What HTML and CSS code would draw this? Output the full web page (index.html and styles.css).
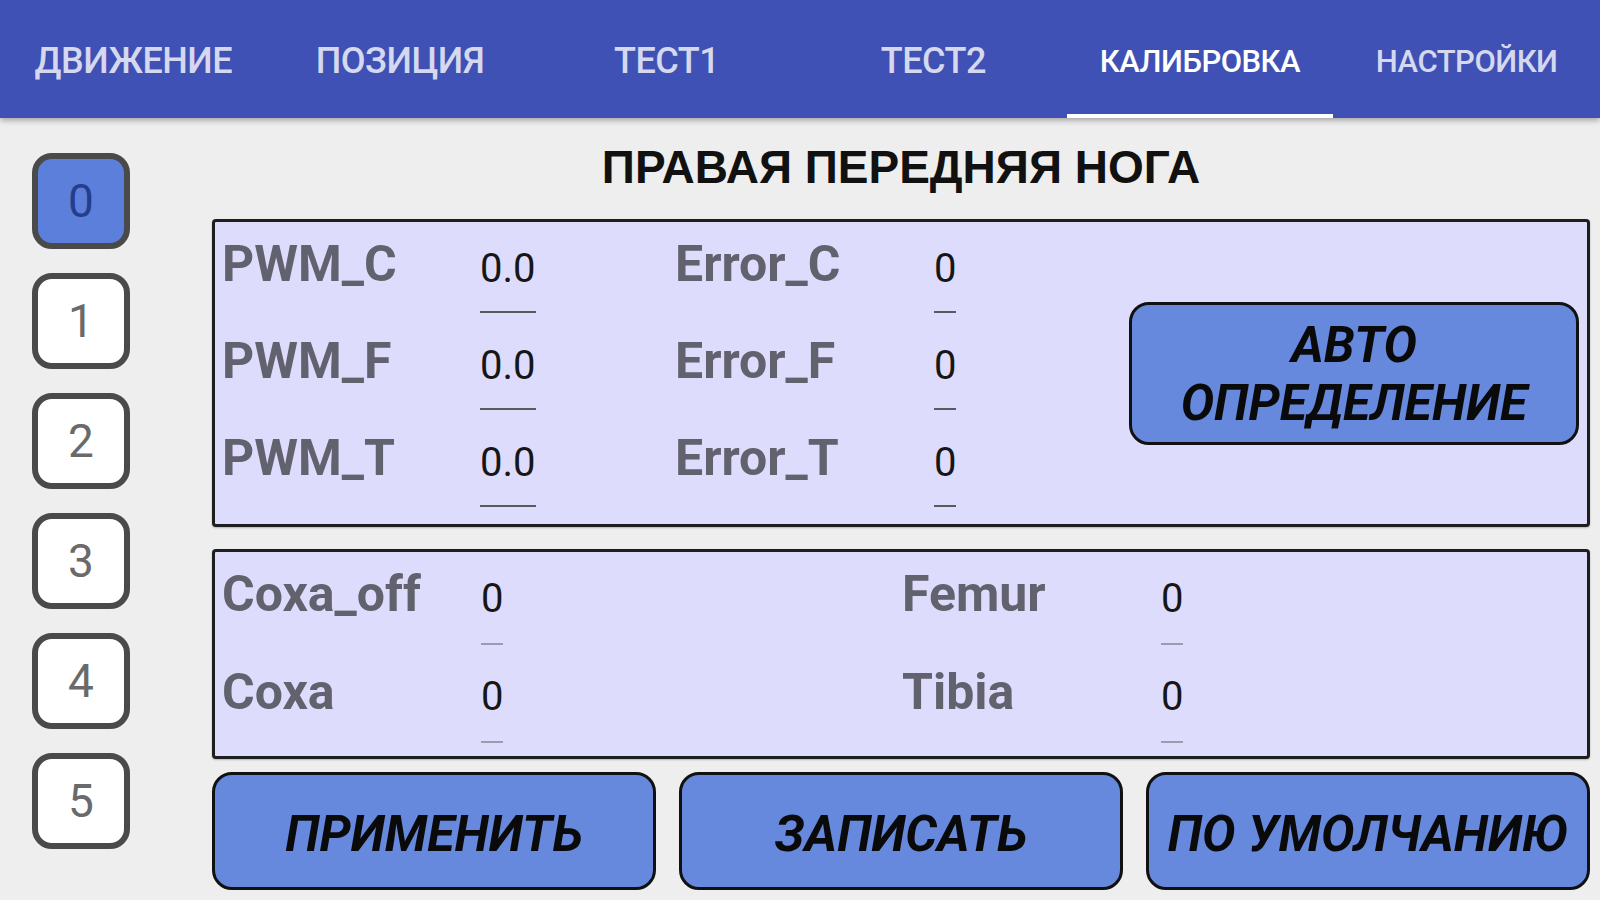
FILE: index.html
```html
<!DOCTYPE html>
<html lang="ru">
<head>
<meta charset="utf-8">
<title>Калибровка</title>
<link rel="stylesheet" href="styles.css">
</head>
<body>
<header class="tabs">
  <div class="tab">ДВИЖЕНИЕ</div>
  <div class="tab">ПОЗИЦИЯ</div>
  <div class="tab">ТЕСТ1</div>
  <div class="tab">ТЕСТ2</div>
  <div class="tab small active">КАЛИБРОВКА</div>
  <div class="tab small">НАСТРОЙКИ</div>
</header>
<main class="main">
  <nav class="legs">
    <div class="leg selected">0</div>
    <div class="leg">1</div>
    <div class="leg">2</div>
    <div class="leg">3</div>
    <div class="leg">4</div>
    <div class="leg">5</div>
  </nav>
  <section class="content">
    <h1 class="title">ПРАВАЯ ПЕРЕДНЯЯ НОГА</h1>
    <div class="panel panel-pwm">
      <div class="grid grid-pwm">
        <div class="label">PWM_C</div><div class="cell"><span class="val">0.0</span></div>
        <div class="label">Error_C</div><div class="cell"><span class="val">0</span></div>
        <div class="label">PWM_F</div><div class="cell"><span class="val">0.0</span></div>
        <div class="label">Error_F</div><div class="cell"><span class="val">0</span></div>
        <div class="label">PWM_T</div><div class="cell"><span class="val">0.0</span></div>
        <div class="label">Error_T</div><div class="cell"><span class="val">0</span></div>
      </div>
      <button class="btn btn-auto">АВТО<br>ОПРЕДЕЛЕНИЕ</button>
    </div>
    <div class="panel panel-off">
      <div class="grid grid-off">
        <div class="label">Coxa_off</div><div class="cell"><span class="val light">0</span></div>
        <div class="label">Femur</div><div class="cell"><span class="val light">0</span></div>
        <div class="label">Coxa</div><div class="cell"><span class="val light">0</span></div>
        <div class="label">Tibia</div><div class="cell"><span class="val light">0</span></div>
      </div>
    </div>
    <div class="actions">
      <button class="btn">ПРИМЕНИТЬ</button>
      <button class="btn">ЗАПИСАТЬ</button>
      <button class="btn">ПО УМОЛЧАНИЮ</button>
    </div>
  </section>
</main>
</body>
</html>
```

FILE: styles.css
```css
* { box-sizing: border-box; }

html, body {
  margin: 0;
  padding: 0;
}

body {
  width: 1600px;
  height: 900px;
  overflow: hidden;
  background: #eeeeee;
  font-family: Roboto, "Noto Sans", "Liberation Sans", sans-serif;
}

.tabs {
  position: relative;
  z-index: 2;
  height: 118px;
  background: #3f51b5;
  box-shadow: 0 2px 6px rgba(0, 0, 0, 0.35);
  display: grid;
  grid-template-columns: repeat(6, 1fr);
}

.tab {
  display: flex;
  align-items: center;
  justify-content: center;
  padding-top: 4px;
  font-size: 36px;
  font-weight: 500;
  color: rgba(255, 255, 255, 0.78);
  letter-spacing: -0.5px;
}

.tab.small {
  font-size: 31px;
}

.tab.active {
  color: #ffffff;
  border-bottom: 4px solid #ffffff;
  padding-top: 8px;
}

.main {
  display: flex;
  height: 782px;
}

.legs {
  width: 212px;
  padding: 35px 0 0 32px;
  display: flex;
  flex-direction: column;
  gap: 24px;
}

.leg {
  width: 98px;
  height: 96px;
  border: 6px solid #4a4a4a;
  border-radius: 20px;
  background: #ffffff;
  display: flex;
  align-items: center;
  justify-content: center;
  font-size: 46px;
  color: #6a6a6a;
}

.leg.selected {
  background: #5b7fdb;
  color: #233f8c;
}

.content {
  width: 1378px;
  padding-top: 22px;
  display: flex;
  flex-direction: column;
}

.title {
  margin: 0;
  font-family: "Liberation Sans", Arial, sans-serif;
  font-size: 46px;
  line-height: 54px;
  font-weight: 700;
  color: #111111;
  text-align: center;
}

.panel {
  border: 3px solid #1e1e1e;
  border-radius: 4px;
  background: #dedcfc;
  box-shadow: 0 1px 2px rgba(0, 0, 0, 0.25);
}

.panel-pwm {
  margin-top: 25px;
  height: 308px;
  padding: 14px 8px 0 7px;
  display: flex;
}

.panel-off {
  margin-top: 22px;
  height: 210px;
  padding: 14px 0 0 7px;
}

.grid {
  display: grid;
  grid-auto-rows: 97px;
}

.grid-pwm {
  grid-template-columns: 258px 195px 259px 120px;
}

.grid-off {
  grid-template-columns: 259px 421px 259px 120px;
  grid-auto-rows: 98px;
}

.label {
  font-size: 50px;
  line-height: 56px;
  font-weight: 700;
  color: #62626f;
}

.cell {
  padding-top: 5px;
}

.val {
  display: inline-block;
  font-size: 40px;
  line-height: 56px;
  color: #161616;
}

.val::after {
  content: "";
  display: block;
  height: 2px;
  margin-top: 14px;
  background: #5a5a5a;
}

.val.light::after {
  background: #9c9cb0;
  margin-top: 16px;
}

.btn {
  font-family: Roboto, "Noto Sans", "Liberation Sans", sans-serif;
  font-weight: 700;
  font-style: italic;
  font-size: 50px;
  color: #0a0a0a;
  background: #6689dd;
  border: 3px solid #111111;
  border-radius: 20px;
  padding: 0;
}

.btn-auto {
  margin-left: auto;
  align-self: center;
  margin-top: -14px;
  width: 450px;
  height: 143px;
  line-height: 58px;
  padding-top: 2px;
}

.actions {
  margin-top: 13px;
  height: 118px;
  display: grid;
  grid-template-columns: repeat(3, 1fr);
  gap: 23px;
}

.actions .btn {
  padding-top: 6px;
}
```
